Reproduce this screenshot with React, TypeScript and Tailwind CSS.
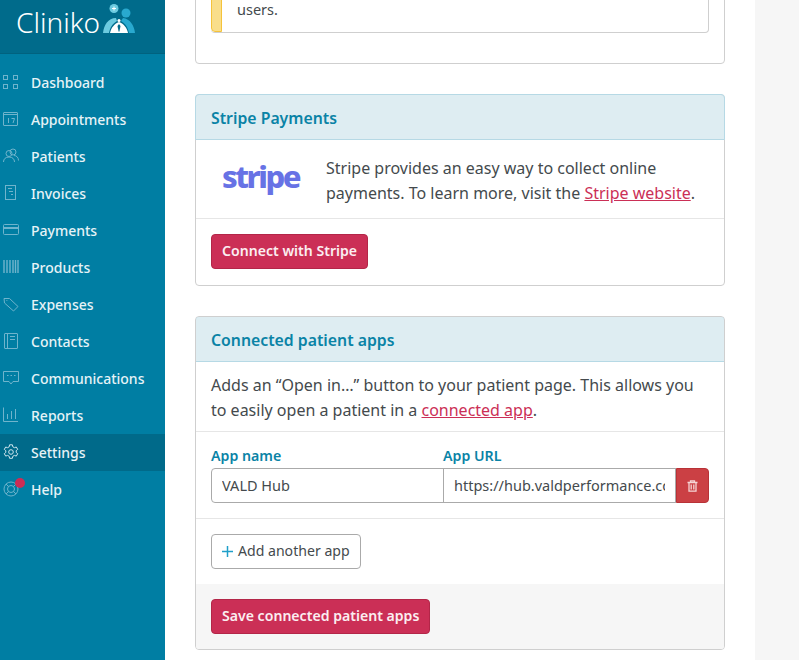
import React from 'react';

const font = { fontFamily: '"Noto Sans", sans-serif' };

// sidebar icons, drawn on a 16x16 box
const icons: Record<string, React.ReactNode> = {
    dashboard: (
        <>
            <rect x="0.5" y="1.5" width="4" height="4" />
            <rect x="10.5" y="1.5" width="4" height="4" />
            <rect x="0.5" y="10.5" width="4" height="4" />
            <rect x="10.5" y="10.5" width="4" height="4" />
        </>
    ),
    appointments: (
        <>
            <rect x="0.5" y="1.5" width="14" height="13" rx="0.5" />
            <path d="M0.5 3.5h14M5.5 7v5M8.5 7.5h3l-1.5 4.5" />
        </>
    ),
    patients: (
        <>
            <circle cx="10" cy="4" r="3" />
            <circle cx="6" cy="5.5" r="3" />
            <path d="M0.5 14c0-3 2-5 5.5-5s5.500 2 5.500 5M11 7.500c2.500 0 4.500 2 4.500 5" />
        </>
    ),
    invoices: (
        <>
            <rect x="2.5" y="0.5" width="10" height="14" />
            <path d="M5 3.500h4M6 6.500h4M8 9.500h2" />
        </>
    ),
    payments: (
        <>
            <rect x="0.5" y="2.5" width="15" height="10" rx="1" />
            <path d="M0.5 5.500h15M0.5 6.500h15" />
        </>
    ),
    products: <path d="M1 1v13M4 1v13M7 1v13M10 1v13M12.500 1v13M15 1v13" strokeWidth="1.4" />,
    expenses: <path d="M1 2.500h5.500l8.500 8-4.500 4.500-9-8zM3.500 4.500h.8" />,
    contacts: (
        <>
            <rect x="1.5" y="0.5" width="13" height="15" rx="0.5" />
            <path d="M4.500 0.5v15M7 3.500h5M7 6.500h5" />
        </>
    ),
    communications: (
        <>
            <path d="M0.5 1.500h15v10h-5.500l-2 2.500-2-2.500h-5.500z" />
            <path d="M4 5.500h1.500M7.500 5.500h1.500M11 5.500h1.500" />
        </>
    ),
    reports: <path d="M0.5 0.5v14h14.500M4.500 12V7M8.500 12V4M12.500 12V2" />,
    settings: (
        <>
            <path d="M6.600 0.8h2.800l.4 2 1.600.9 1.900-.7 1.400 2.400-1.500 1.300v1.700l1.500 1.300-1.400 2.400-1.900-.7-1.600.9-.4 2h-2.800l-.4-2-1.600-.9-1.900.7-1.400-2.400 1.500-1.300v-1.700l-1.500-1.300 1.400-2.400 1.900.7 1.600-.9z" />
            <circle cx="8" cy="8" r="2.3" />
        </>
    ),
    help: (
        <>
            <circle cx="8" cy="8" r="7" />
            <circle cx="8" cy="8" r="3.5" />
            <path d="M3 3l2.500 2.500M13 3l-2.500 2.500M3 13l2.500-2.500M13 13l-2.500-2.500" />
        </>
    ),
};

const navItems = [
    { id: 'dashboard', label: 'Dashboard' },
    { id: 'appointments', label: 'Appointments' },
    { id: 'patients', label: 'Patients' },
    { id: 'invoices', label: 'Invoices' },
    { id: 'payments', label: 'Payments' },
    { id: 'products', label: 'Products' },
    { id: 'expenses', label: 'Expenses' },
    { id: 'contacts', label: 'Contacts' },
    { id: 'communications', label: 'Communications' },
    { id: 'reports', label: 'Reports' },
    { id: 'settings', label: 'Settings' },
    { id: 'help', label: 'Help' },
];

function Logo() {
    return (
        <div className="flex h-[54px] shrink-0 items-start border-b border-[#00627f] bg-[#006b8b] pl-[16px] pt-[2px]">
            <span className="text-[28px] leading-[40px] font-light text-white" style={font}>Cliniko</span>
            <svg width="32" height="30" viewBox="0 0 32 30" className="ml-[3px] mt-[2px]">
                {/* heads */}
                <circle cx="23" cy="9" r="4.5" fill="#29a9cf" />
                <circle cx="11" cy="4.5" r="4.5" fill="#6ccbe0" />
                <path d="M9 4.500h4M11 2.500v4" stroke="#ffffff" strokeWidth="1" />
                {/* bodies */}
                <path d="M0 29C1 21 5 14 13 14l1 3C9 20 7 24 6 29z" fill="#6ccbe0" />
                <path d="M32 29c-1-8-5-14-12-15l-2 3c5 3 7 7 8 12z" fill="#29a9cf" />
                {/* shirt and tie */}
                <path d="M7 29c1-5 4-9 9-11 5 2 8 6 9 11z" fill="#ffffff" />
                <path d="M16 20l-1.500 2 1 5 .5 1 .5-1 1-5z" fill="#006b8b" />
                <circle cx="16" cy="16.500" r="1.500" fill="#ffffff" />
            </svg>
        </div>
    );
}

function Sidebar() {
    return (
        <aside className="flex w-[165px] shrink-0 flex-col bg-[#007ea3]" style={font}>
            <Logo />
            <nav className="mt-[10px] flex flex-col">
                {navItems.map((item) => (
                    <div
                        key={item.id}
                        className={`relative flex h-[37px] items-center text-[14px] font-medium text-[#e6f3f7] ${
                            item.id === 'settings' ? 'bg-[#006a8a]' : ''
                        }`}
                    >
                        <svg
                            width="16"
                            height="16"
                            viewBox="0 0 16 16"
                            fill="none"
                            stroke={item.id === 'settings' ? '#cfe6ee' : '#6fb4cc'}
                            strokeWidth="1"
                            className="-mt-px ml-[3px] shrink-0"
                        >
                            {icons[item.id]}
                        </svg>
                        <span className="ml-[12px]">{item.label}</span>
                        {item.id === 'help' && (
                            <span className="absolute left-[15px] top-[7px] h-[10px] w-[10px] rounded-full bg-[#cc2d55]" />
                        )}
                    </div>
                ))}
            </nav>
        </aside>
    );
}

function CardHeader({ title }: { title: string }) {
    return (
        <div className="-mx-px -mt-px flex h-[46px] items-center rounded-t-[4px] border border-[#b6d9e5] bg-[#deedf2] px-[15px] pt-[4px] text-[15.8px] font-semibold text-[#0a83a6]">
            {title}
        </div>
    );
}

function TrashIcon() {
    return (
        <svg width="11" height="12" viewBox="0 0 11 12" fill="none" stroke="#f6d5d5" strokeWidth="1.3">
            <path d="M0.5 2.500h10M3.500 2.500v-1.700h4v1.700M2 2.500v8.700h7v-8.700M4.200 4.500v5M6.800 4.500v5" />
        </svg>
    );
}

const primaryBtn =
    'h-[35px] rounded-[4px] border border-[#b32648] bg-[#cb2f56] px-[10px] pb-[2px] text-[14.1px] font-semibold text-[#fbeef1]';

const field = 'h-[35px] w-[233px] border border-[#aaaaaa] px-[10px] pb-[2px] text-[14.5px] text-[#444a4d] outline-none';

export default function App() {
    return (
        <div className="flex h-[660px] w-[799px] overflow-hidden bg-white text-[#444a4d]" style={font}>
            <Sidebar />
            <main className="h-[660px] w-[590px] shrink-0 overflow-hidden px-[30px]">
                {/* first card is scrolled off the top */}
                <section className="-mt-[31px] h-[95px] rounded-[4px] border border-[#cfcfcf] p-[15px]">
                    <div className="flex h-[48px] overflow-hidden rounded-[4px] border border-[#cfcfcf] border-l-0">
                        <div className="w-[11px] shrink-0 rounded-l-[4px] border border-[#f5c33b] bg-[#f9de8b]" />
                        <p className="-mt-[5px] pl-[15px] text-[14.5px] leading-[19px]">
                            Enabling the security check for <span className="text-[#cb2f56] underline">settings</span> affects all
                            <br />
                            users.
                        </p>
                    </div>
                </section>

                <section className="mt-[30px] h-[192px] rounded-[4px] border border-[#cfcfcf]">
                    <CardHeader title="Stripe Payments" />
                    <div className="flex h-[79px] items-center border-b border-[#e6e6e6] pl-[26px] pr-[15px]">
                        <span className="-mt-[7px] w-[104px] shrink-0 text-[31px] leading-[36px] font-extrabold tracking-[-2.5px] text-[#6772e5]">stripe</span>
                        <p className="mt-[4px] text-[16px] leading-[25px]">
                            Stripe provides an easy way to collect online payments. To learn more, visit the{' '}
                            <span className="text-[#cb2f56] underline">Stripe website</span>.
                        </p>
                    </div>
                    <div className="px-[15px] pt-[15px]">
                        <button className={primaryBtn}>Connect with Stripe</button>
                    </div>
                </section>

                <section className="mt-[30px] h-[334px] overflow-hidden rounded-[4px] border border-[#cfcfcf]">
                    <CardHeader title="Connected patient apps" />
                    <p className="h-[70px] border-b border-[#e6e6e6] px-[15px] pt-[11px] text-[16px] leading-[25px]">
                        Adds an “Open in…” button to your patient page. This allows you to easily open a patient in a{' '}
                        <span className="text-[#cb2f56] underline">connected app</span>.
                    </p>
                    <div className="h-[87px] border-b border-[#e6e6e6] px-[15px] pt-[11px]">
                        <div className="flex text-[14.2px] leading-[25px] font-semibold text-[#0a83a6]">
                            <span className="w-[232px]">App name</span>
                            <span>App URL</span>
                        </div>
                        <div className="flex h-[35px]">
                            <input readOnly value="VALD Hub" className={`${field} rounded-l-[4px]`} />
                            <input readOnly value="https://hub.valdperformance.com" className={`${field} -ml-px`} />
                            <button className="flex w-[33px] items-center justify-center rounded-r-[4px] border border-[#b83237] bg-[#cb4044]">
                                <TrashIcon />
                            </button>
                        </div>
                    </div>
                    <div className="h-[65px] px-[15px] pt-[15px]">
                        <button className="flex h-[35px] items-center rounded-[4px] border border-[#aaaaaa] px-[10px] pb-[2px] text-[14.1px]">
                            <svg width="11" height="11" viewBox="0 0 11 11" stroke="#1f9fc9" strokeWidth="1.5" className="mr-[5px] mt-[2px]">
                                <path d="M5.500 0v11M0 5.500h11" />
                            </svg>
                            Add another app
                        </button>
                    </div>
                    <div className="h-[65px] bg-[#f6f6f6] px-[15px] pt-[15px]">
                        <button className={primaryBtn}>Save connected patient apps</button>
                    </div>
                </section>
            </main>
            <div className="flex-1 bg-[#f6f6f6]" />
        </div>
    );
}
